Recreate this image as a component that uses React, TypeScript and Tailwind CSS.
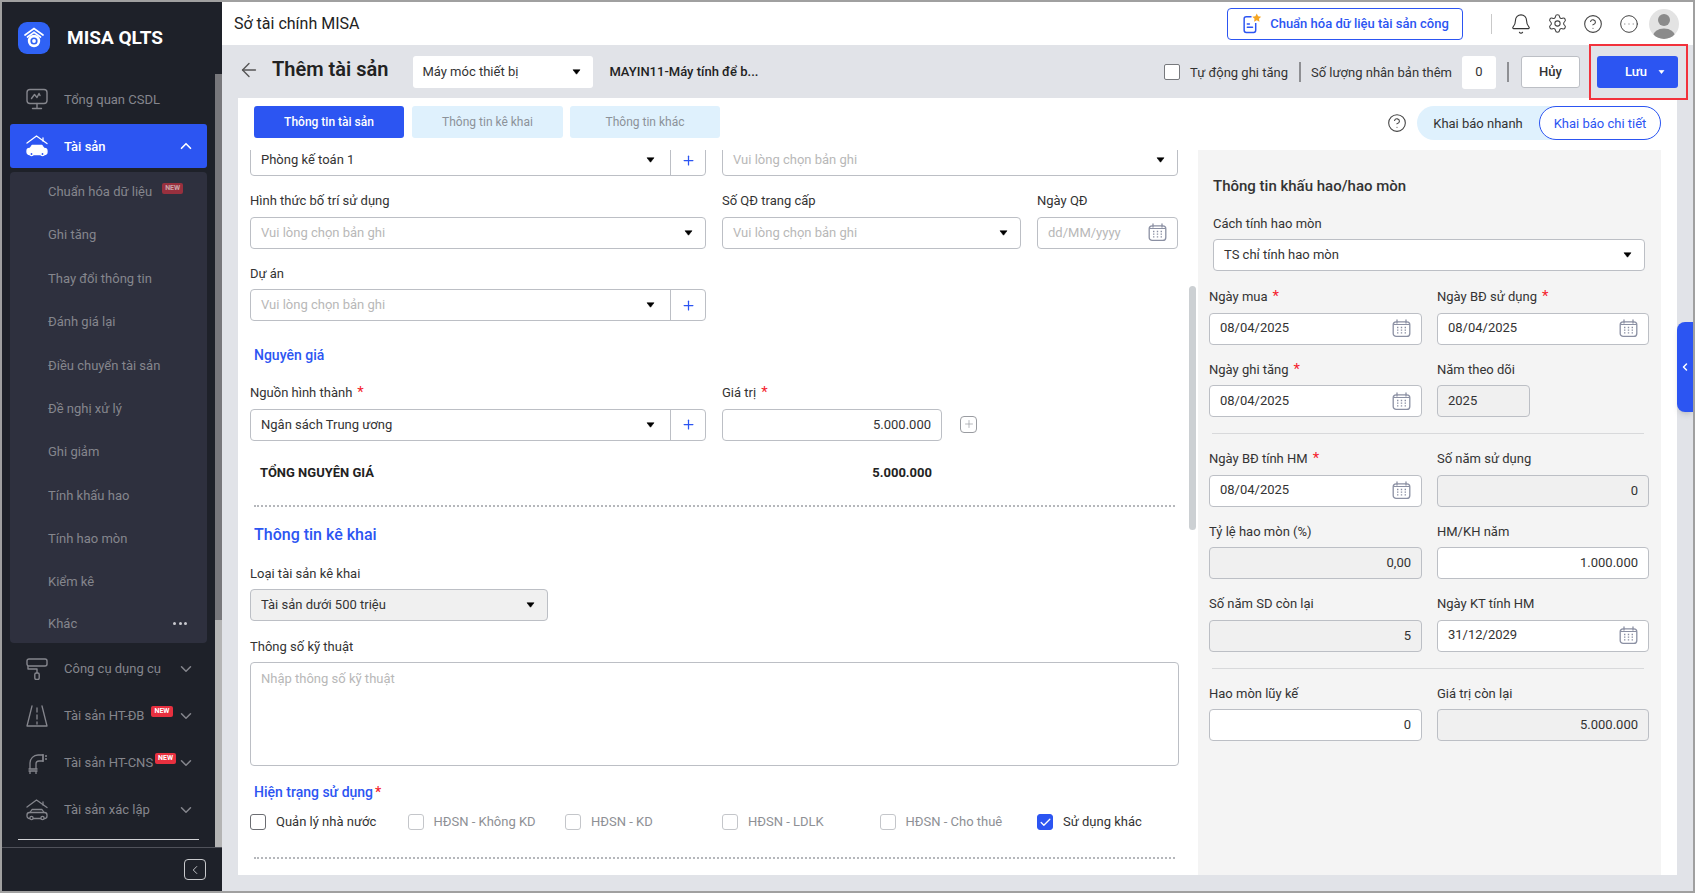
import React from "react";
import { Bell, Settings, CircleHelp, CircleEllipsis, ArrowLeft, ChevronUp, ChevronDown, ChevronLeft, Plus, Check } from "lucide-react";

const Caret = ({ className = "" }: { className?: string }) => (
  <svg width="9" height="6" viewBox="0 0 9 6" className={className}><path d="M1 0.8h7L4.5 5.2z" fill="currentColor" stroke="currentColor" strokeLinejoin="round" strokeWidth="0.6" /></svg>
);
const Cal = () => (
  <svg width="19" height="19" viewBox="0 0 19 19" fill="none" className="text-[#8b90a3] shrink-0">
    <rect x="1.2" y="2.8" width="16.6" height="14.6" rx="3" stroke="currentColor" strokeWidth="1.3" />
    <path d="M5 1v3M14 1v3" stroke="currentColor" strokeWidth="1.3" strokeLinecap="round" />
    <path d="M1.5 5.5h16" stroke="currentColor" strokeWidth="1" />
    <path d="M5 8.5h1.4M8.8 8.5h1.4M12.6 8.5H14M5 11.2h1.4M8.8 11.2h1.4M12.6 11.2H14M5 13.9h1.4M8.8 13.9h1.4M12.6 13.9H14" stroke="currentColor" strokeWidth="1.3" />
  </svg>
);

const Star = () => <span className="text-[#f5222d] ml-[5px] text-[15px]">*</span>;

const Lbl = ({ t, req }: { t: string; req?: boolean }) => (
  <div className="h-5 leading-[19px] text-[13px] text-[#333] mb-[5.5px] whitespace-nowrap">{t}{req && <Star />}</div>
);

const Select = ({ text, ph, add, cls = "", bg = "bg-white", nudge = "" }: { text?: string; ph?: string; add?: boolean; cls?: string; bg?: string; nudge?: string }) => (
  <div className={`h-8 flex items-center border border-[#bcbfc5] rounded-[4px] ${bg} ${cls}`}>
    <span className={`flex-1 pl-[10px] ${nudge} text-[13px] whitespace-nowrap ${text ? "text-[#333]" : "text-[#b8b8b8]"}`}>{text ?? ph}</span>
    <Caret className={`text-black ${add ? "mr-[15px]" : "mr-[12px]"}`} />
    {add && (
      <span className="w-[35px] h-full border-l border-[#bcbfc5] flex items-center justify-center text-[#2c55f2]"><Plus size={15} strokeWidth={2} /></span>
    )}
  </div>
);

const DateBox = ({ v, cls = "" }: { v: string; cls?: string }) => (
  <div className={`h-8 bg-white border border-[#bcbfc5] rounded-[4px] flex items-center justify-between pl-[10px] pr-[10px] text-[13px] text-[#333] ${cls}`}>
    <span className="pb-px">{v}</span><Cal />
  </div>
);

const Num = ({ v, off, cls = "" }: { v?: string; off?: boolean; cls?: string }) => (
  <div className={`h-8 border border-[#bcbfc5] rounded-[4px] flex items-center justify-end pr-[10px] text-[13px] text-[#333] ${off ? "bg-[#f0f0f0]" : "bg-white"} ${cls}`}>{v}</div>
);

const Dashed = ({ cls = "" }: { cls?: string }) => <div className={`border-t-2 border-dotted border-[#b5b7bb] ${cls}`} />;

const CheckItem = ({ t, on, off }: { t: string; on?: boolean; off?: boolean }) => (
  <div className="flex items-center">
    <span className={`w-4 h-4 rounded-[3px] border flex items-center justify-center ${on ? "bg-[#2c55f2] border-[#2c55f2]" : off ? "border-[#c4c6ca] bg-white" : "border-[#6b6d72] bg-white"}`}>
      {on && <Check size={13} strokeWidth={2.4} className="text-white" />}
    </span>
    <span className={`ml-[10px] text-[13px] whitespace-nowrap ${off ? "text-[#8e9095]" : "text-[#333]"}`}>{t}</span>
  </div>
);

const Logo = () => (
  <div className="w-8 h-8 rounded-[9px] bg-[#2f62f5] flex items-center justify-center">
    <svg width="24" height="24" viewBox="0 0 24 24" fill="none">
      <path d="M3 9 12 2.5 21 9" stroke="#fff" strokeWidth="1.7" strokeLinecap="round" />
      <path d="M5.5 11 12 6.2l6.5 4.8" stroke="#fff" strokeWidth="1.7" strokeLinecap="round" />
      <circle cx="12" cy="15" r="6.2" fill="#fff" />
      <circle cx="12" cy="15" r="3.6" fill="#2f62f5" />
      <circle cx="12" cy="15" r="1.9" fill="#fff" />
    </svg>
  </div>
);

const IconMonitor = () => (
  <svg width="22" height="22" viewBox="0 0 22 22" fill="none" stroke="currentColor" strokeWidth="1.4" strokeLinecap="round" strokeLinejoin="round">
    <rect x="1" y="1.5" width="20" height="14" rx="3" />
    <path d="M5.5 10.5 8.5 6.5l2.5 3 2-4 1 2" />
    <path d="M11 15.5v4M6.5 20.5h9" />
  </svg>
);
const IconHouseCar = ({ solid }: { solid?: boolean }) => (
  <svg width="22" height="22" viewBox="0 0 22 22" fill="none" stroke="currentColor" strokeWidth="1.3" strokeLinecap="round" strokeLinejoin="round">
    <path d="M1 8 10.5 1 21 8.5" />
    <path d="M17 3v3" />
    <path d="M4 13.5 6 10.5h10l2 3" fill={solid ? "currentColor" : "none"} />
    <rect x="1" y="13.5" width="20" height="6" rx="2.5" fill={solid ? "currentColor" : "none"} />
    <circle cx="5.5" cy="19" r="1.6" fill={solid ? "#2c55f2" : "#1e2129"} />
    <circle cx="16.5" cy="19" r="1.6" fill={solid ? "#2c55f2" : "#1e2129"} />
  </svg>
);
const IconRoller = () => (
  <svg width="22" height="22" viewBox="0 0 22 22" fill="none" stroke="currentColor" strokeWidth="1.4" strokeLinejoin="round">
    <rect x="1" y="1" width="20" height="7" rx="2" />
    <path d="M2 8v3h9v4" />
    <rect x="8.8" y="15" width="4.4" height="6.5" rx="1.5" />
  </svg>
);
const IconRoad = () => (
  <svg width="22" height="22" viewBox="0 0 22 22" fill="none" stroke="currentColor" strokeWidth="1.3" strokeLinecap="round" strokeLinejoin="round">
    <path d="M6 1 1 21h20L16 1" />
    <path d="M11 3v4M11 10v4M11 17v2" />
  </svg>
);
const IconPipe = () => (
  <svg width="22" height="22" viewBox="0 0 22 22" fill="none" stroke="currentColor" strokeWidth="1.3" strokeLinejoin="round">
    <path d="M4 17v-6a8 8 0 0 1 8-8h5v6h-4a3 3 0 0 0-3 3v5" />
    <path d="M2.5 17h9M2.5 19h9M4 19v3M10 19v3" />
    <path d="M17 2v8M19 4h2M19 7h2" />
  </svg>
);

const Sub = ({ t, badge }: { t: string; badge?: boolean }) => (
  <div className="h-[43.4px] flex items-center pl-[38px] text-[13px] text-[#85868d] whitespace-nowrap">
    {t}
    {badge && <span className="ml-[10px] -mt-[6px] bg-[#98303e] text-[#c9a5ab] text-[7px] font-bold rounded-[2px] px-[3px] h-[11px] leading-[11px]">NEW</span>}
  </div>
);

const Menu = ({ icon, t, badge }: { icon: React.ReactNode; t: string; badge?: string }) => (
  <div className="h-[47px] flex items-center pl-6 text-[#85868d] mr-[20px]">
    <span className="w-[22px] shrink-0 flex">{icon}</span>
    <span className="ml-[16px] text-[13px] whitespace-nowrap">{t}</span>
    {badge && <span className={`${badge} -mt-[8px] bg-[#e8303f] text-white text-[7px] font-bold rounded-[2px] px-[3px] h-[11px] leading-[11px]`}>NEW</span>}
    <ChevronDown size={18} className="ml-auto shrink-0" strokeWidth={2} />
  </div>
);

const Sidebar = () => (
  <aside className="w-[220px] shrink-0 bg-[#1e2129] flex flex-col">
    <div className="h-[72px] shrink-0 flex items-start pl-4 pt-5">
      <Logo />
      <span className="ml-[17px] mt-[5px] text-white font-bold text-[19px] leading-[22px]">MISA QLTS</span>
    </div>
    <div className="relative flex-1 min-h-0 overflow-hidden">
      <div className="pr-[7px] overflow-hidden">
        <div className="h-[50px] flex items-center pl-6 text-[#85868d]">
          <IconMonitor />
          <span className="ml-[16px] text-[13px] mt-px">Tổng quan CSDL</span>
        </div>
        <div className="h-11 ml-2 mr-2 bg-[#2c55f2] rounded-[3px] flex items-center pl-4 pr-[12px] text-white">
          <IconHouseCar solid />
          <span className="ml-[16px] text-[13px] font-medium mt-px">Tài sản</span>
          <ChevronUp size={18} strokeWidth={2.2} className="ml-auto" />
        </div>
        <div className="mt-1 ml-2 mr-2 h-[471px] bg-[#2e303e] rounded-[4px] flex flex-col">
          <div className="-mt-[2px]">
            <Sub t="Chuẩn hóa dữ liệu" badge />
            <Sub t="Ghi tăng" />
            <Sub t="Thay đổi thông tin" />
            <Sub t="Đánh giá lại" />
            <Sub t="Điều chuyển tài sản" />
            <Sub t="Đề nghị xử lý" />
            <Sub t="Ghi giảm" />
            <Sub t="Tính khấu hao" />
            <Sub t="Tính hao mòn" />
            <Sub t="Kiểm kê" />
          </div>
          <div className="h-[43px] flex items-center justify-between pl-[38px] pr-[20px] text-[13px] text-[#85868d]">
            <span>Khác</span>
            <span className="flex gap-[2.5px]"><i className="w-[3px] h-[3px] rounded-full bg-[#c9c9cf]" /><i className="w-[3px] h-[3px] rounded-full bg-[#c9c9cf]" /><i className="w-[3px] h-[3px] rounded-full bg-[#c9c9cf]" /></span>
          </div>
        </div>
        <div className="mt-[2px]">
          <Menu icon={<IconRoller />} t="Công cụ dụng cụ" />
          <Menu icon={<IconRoad />} t="Tài sản HT-ĐB" badge="ml-[7px]" />
          <Menu icon={<IconPipe />} t="Tài sản HT-CNS" badge="ml-[2px]" />
          <Menu icon={<IconHouseCar />} t="Tài sản xác lập" />
        </div>
        <div className="mt-[6px] ml-4 mr-[16px] border-t border-[#d2d3d6]" />
      </div>
      <div className="absolute right-0 top-0 bottom-0 w-[7px] bg-[#b4b4b4]"><div className="h-[546px] bg-[#77777b]" /></div>
    </div>
    <div className="h-[44px] shrink-0 border-t border-[#50525a] flex items-center justify-end pr-[16px]">
      <span className="w-[22px] h-[21px] border border-[#c8c9cc] rounded-[4px] flex items-center justify-center text-[#d5d6d9]"><ChevronLeft size={14} strokeWidth={1.5} /></span>
    </div>
  </aside>
);

const TopBar = () => (
  <header className="h-[43px] shrink-0 bg-white flex items-center pl-3 pr-[14px]">
    <span className="text-[16px] text-[#222]">Sở tài chính MISA</span>
    <div className="ml-auto w-[236px] h-8 border border-[#2c55f2] rounded-[4px] flex items-center justify-center text-[#2c55f2] text-[13px] font-medium">
      <svg width="21" height="22" viewBox="0 0 20 20" fill="none" className="mr-[8px]">
        <path d="M10 3H5a2 2 0 0 0-2 2v11a2 2 0 0 0 2 2h7a2 2 0 0 0 2-2V9" stroke="#2c55f2" strokeWidth="1.4" />
        <path d="M6 10h2M6 13h5" stroke="#2c55f2" strokeWidth="1.4" strokeLinecap="round" />
        <path d="m15 0 1.3 2.6 2.9.4-2.1 2 .5 2.9-2.6-1.4-2.6 1.4.5-2.9-2.1-2 2.9-.4z" fill="#f5a623" />
      </svg>
      Chuẩn hóa dữ liệu tài sản công
    </div>
    <span className="ml-[28px] w-px h-5 bg-[#c9c9c9]" />
    <Bell size={22} strokeWidth={1.2} className="ml-[18px] text-[#333]" />
    <Settings size={21} strokeWidth={1.2} className="ml-[15px] text-[#444]" />
    <CircleHelp size={20} strokeWidth={1.3} className="ml-[15px] text-[#444]" />
    <CircleEllipsis size={20} strokeWidth={1.2} className="ml-[16px] text-[#444]" />
    <span className="ml-[10px] w-[30px] h-[30px] rounded-full bg-[#e3e3e3] overflow-hidden flex items-end justify-center shrink-0">
      <svg width="30" height="30" viewBox="0 0 30 30"><circle cx="15" cy="11" r="6" fill="#8b8b8b" /><ellipse cx="15" cy="27" rx="11" ry="7.5" fill="#8b8b8b" /></svg>
    </span>
  </header>
);

const Toolbar = () => (
  <div className="h-[53px] shrink-0 flex items-center pl-4 relative">
    <ArrowLeft size={22} strokeWidth={1.5} className="text-[#555] -mt-[3px]" />
    <span className="ml-[12px] text-[20px] font-semibold text-[#222] -mt-[6px]">Thêm tài sản</span>
    <div className="ml-[25px] w-[180px] h-8 bg-white rounded-[3px] flex items-center justify-between pl-[9px] pr-[12px] text-[13px] text-[#333]">
      <span className="mt-px">Máy móc thiết bị</span><Caret className="text-black" />
    </div>
    <span className="ml-[16px] text-[13px] font-medium text-[#222]">MAYIN11-Máy tính để b...</span>
    <div className="ml-auto flex items-center pr-[15px]">
      <span className="w-4 h-4 bg-white border border-[#77797d] rounded-[2px] mt-px" />
      <span className="ml-[10px] text-[13px] text-[#333] mt-[2px]">Tự động ghi tăng</span>
      <span className="ml-[11px] w-[2px] h-5 bg-[#8e8f93] mt-px" />
      <span className="ml-[10px] text-[13px] text-[#333] mt-[2px]">Số lượng nhân bản thêm</span>
      <span className="ml-[10px] w-[34px] h-[33px] bg-white rounded-[3px] flex items-center justify-center text-[13px] text-[#333] mt-px">0</span>
      <span className="ml-[11px] w-[2px] h-5 bg-[#8e8f93] mt-px" />
      <span className="ml-[12px] w-[59px] h-8 bg-white border border-[#bcbfc5] rounded-[3px] flex items-center justify-center text-[13px] font-medium text-[#333]">Hủy</span>
      <span className="ml-[17px] w-[81px] h-8 bg-[#2c55f2] rounded-[3px] flex items-center justify-center text-white text-[13px] font-medium pl-[16px]">Lưu<Caret className="ml-[10px] scale-75" /></span>
    </div>
    <div className="absolute left-[1367px] top-[-1px] w-[99px] h-[56px] border-2 border-[#f2323c]" />
  </div>
);

const Tabs = () => (
  <div className="h-[52px] shrink-0 flex items-start pt-2 pl-4 pr-[16px]">
    <span className="w-[150px] h-8 rounded-[3px] bg-[#2c55f2] text-white text-[12px] font-medium flex items-center justify-center">Thông tin tài sản</span>
    <span className="ml-2 w-[151px] h-8 rounded-[3px] bg-[#dff1fd] text-[#8c9299] text-[12px] flex items-center justify-center">Thông tin kê khai</span>
    <span className="ml-[7px] w-[150px] h-8 rounded-[3px] bg-[#dff1fd] text-[#8c9299] text-[12px] flex items-center justify-center">Thông tin khác</span>
    <CircleHelp size={20} strokeWidth={1.3} className="ml-auto mt-[7px] text-[#444]" />
    <div className="ml-[10px] w-[244px] h-[34px] rounded-full bg-[#dff1fd] flex items-center text-[13px]">
      <span className="flex-1 text-center text-[#333] mt-px">Khai báo nhanh</span>
      <span className="w-[122px] h-[34px] rounded-full bg-white border border-[#2c55f2] text-[#2c55f2] flex items-center justify-center pt-px">Khai báo chi tiết</span>
    </div>
  </div>
);

const LeftForm = () => (
  <div className="relative w-[960px] shrink-0 overflow-hidden">
    <div className="pl-[12px] pr-[19px]">
      <div className="flex gap-4">
        <div className="w-[456px] h-[26px] overflow-hidden"><Select text="Phòng kế toán 1" add cls="-mt-[6px]" /></div>
        <div className="w-[456px] h-[26px] overflow-hidden"><Select ph="Vui lòng chọn bản ghi" cls="-mt-[6px]" /></div>
      </div>
      <div className="mt-[15px] flex gap-4">
        <div className="w-[456px]"><Lbl t="Hình thức bố trí sử dụng" /><Select ph="Vui lòng chọn bản ghi" /></div>
        <div className="w-[299px]"><Lbl t="Số QĐ trang cấp" /><Select ph="Vui lòng chọn bản ghi" /></div>
        <div className="w-[141px]"><Lbl t="Ngày QĐ" />
          <div className="h-8 border border-[#bcbfc5] rounded-[4px] bg-white flex items-center justify-between px-[10px] text-[13px] text-[#b8b8b8]"><span>dd/MM/yyyy</span><Cal /></div>
        </div>
      </div>
      <div className="mt-[15px] w-[456px]"><Lbl t="Dự án" /><Select ph="Vui lòng chọn bản ghi" add /></div>
      <div className="mt-6 ml-1 h-5 leading-5 text-[14px] font-medium text-[#2c55f2]">Nguyên giá</div>
      <div className="mt-[18px] flex gap-4 items-end">
        <div className="w-[456px]"><Lbl t="Nguồn hình thành" req /><Select text="Ngân sách Trung ương" add /></div>
        <div className="w-[220px]"><Lbl t="Giá trị" req /><Num v="5.000.000" /></div>
        <span className="mb-[8px] ml-[2px] w-[17px] h-[17px] border border-[#9a9ca1] rounded-[4px] flex items-center justify-center text-[#9a9ca1]"><Plus size={12} strokeWidth={1.4} /></span>
      </div>
      <div className="mt-[22px] w-[692px] h-5 flex items-center justify-between pl-[10px] pr-[10px] text-[13px] font-bold text-[#222]">
        <span>TỔNG NGUYÊN GIÁ</span><span>5.000.000</span>
      </div>
      <Dashed cls="mt-[22px] ml-1 mr-1" />
      <div className="mt-[16px] ml-1 h-6 leading-6 text-[16px] font-medium text-[#2c55f2]">Thông tin kê khai</div>
      <div className="mt-[17px] w-[298px]"><Lbl t="Loại tài sản kê khai" /><Select text="Tài sản dưới 500 triệu" bg="bg-[#f0f0f0]" nudge="pb-px" /></div>
      <div className="mt-[15.5px]"><Lbl t="Thông số kỹ thuật" />
        <div className="h-[104px] border border-[#bcbfc5] rounded-[4px] bg-white pl-[10px] pt-[6px] text-[13px] text-[#b8b8b8]">Nhập thông số kỹ thuật</div>
      </div>
      <div className="mt-[16px] ml-1 h-5 leading-5 text-[14px] font-medium text-[#2c55f2]">Hiện trạng sử dụng<span className="text-[#f5222d] ml-[2px]">*</span></div>
      <div className="mt-[10px] h-[20px] grid grid-cols-[157.5px_157.5px_157px_157.5px_157.5px_auto]">
        <CheckItem t="Quản lý nhà nước" />
        <CheckItem t="HĐSN - Không KD" off />
        <CheckItem t="HĐSN - KD" off />
        <CheckItem t="HĐSN - LDLK" off />
        <CheckItem t="HĐSN - Cho thuê" off />
        <CheckItem t="Sử dụng khác" on />
      </div>
      <Dashed cls="mt-[25px] ml-1 mr-1" />
    </div>
    <div className="absolute right-[2px] top-[136px] w-[7px] h-[244px] rounded-full bg-[#ccd0d3]" />
  </div>
);

const F = ({ t, req, children }: { t: string; req?: boolean; children: React.ReactNode }) => (
  <div><Lbl t={t} req={req} />{children}</div>
);

const Rows = ({ children }: { children: React.ReactNode }) => (
  <div className="grid grid-cols-[213px_212px] gap-x-[15px] gap-y-[15px]">{children}</div>
);

const RightPanel = () => (
  <div className="w-[463px] shrink-0 bg-[#f4f4f4] pl-[11px]">
    <div className="ml-[4px] mt-[26px] h-5 leading-5 text-[15px] font-medium text-[#333]">Thông tin khấu hao/hao mòn</div>
    <div className="ml-[4px] mt-[17.5px] h-5 leading-5 text-[13px] text-[#333]">Cách tính hao mòn</div>
    <Select text="TS chỉ tính hao mòn" nudge="pb-px" cls="ml-[4px] mt-[5.5px] w-[432px]" />
    <div className="mt-4 mr-[12px]">
      <Rows>
        <F t="Ngày mua" req><DateBox v="08/04/2025" /></F>
        <F t="Ngày BĐ sử dụng" req><DateBox v="08/04/2025" /></F>
        <F t="Ngày ghi tăng" req><DateBox v="08/04/2025" /></F>
        <F t="Năm theo dõi"><div className="h-8 w-[93px] bg-[#f0f0f0] border border-[#bcbfc5] rounded-[4px] flex items-center pl-[10px] pb-px text-[13px] text-[#333]">2025</div></F>
      </Rows>
      <div className="mt-[16px] mb-[15px] ml-[3px] mr-[5px] border-t border-[#d8d9db]" />
      <Rows>
        <F t="Ngày BĐ tính HM" req><DateBox v="08/04/2025" /></F>
        <F t="Số năm sử dụng"><Num v="0" off /></F>
        <F t="Tỷ lệ hao mòn (%)"><Num v="0,00" off /></F>
        <F t="HM/KH năm"><Num v="1.000.000" /></F>
        <F t="Số năm SD còn lại"><Num v="5" off /></F>
        <F t="Ngày KT tính HM"><DateBox v="31/12/2029" /></F>
      </Rows>
      <div className="mt-[16px] mb-[15px] ml-[3px] mr-[5px] border-t border-[#d8d9db]" />
      <Rows>
        <F t="Hao mòn lũy kế"><Num v="0" /></F>
        <F t="Giá trị còn lại"><Num v="5.000.000" off /></F>
      </Rows>
    </div>
  </div>
);

export default function App() {
  return (
    <div className="relative w-[1695px] h-[893px] box-border border-2 border-[#a0a0a0] flex overflow-hidden bg-[#e1e3e8]" style={{ fontFamily: "Roboto, 'Noto Sans', sans-serif" }}>
      <Sidebar />
      <main className="flex-1 min-w-0 flex flex-col">
        <TopBar />
        <Toolbar />
        <div className="ml-4 mr-[16px] h-[777px] bg-white flex flex-col overflow-hidden">
          <Tabs />
          <div className="flex flex-1 min-h-0">
            <LeftForm />
            <RightPanel />
          </div>
        </div>
      </main>
      <div className="absolute right-0 top-[320px] w-4 h-[90px] rounded-l-[8px] bg-[#2c55f2] flex items-center justify-center text-white shadow-md"><ChevronLeft size={12} strokeWidth={3} /></div>
    </div>
  );
}
